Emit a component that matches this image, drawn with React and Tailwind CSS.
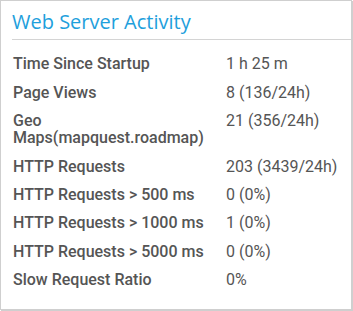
import React from "react";

const rows = [
  ["Time Since Startup", "1 h 25 m"],
  ["Page Views", "8 (136/24h)"],
  ["Geo Maps(mapquest.roadmap)", "21 (356/24h)"],
  ["HTTP Requests", "203 (3439/24h)"],
  ["HTTP Requests > 500 ms", "0 (0%)"],
  ["HTTP Requests > 1000 ms", "1 (0%)"],
  ["HTTP Requests > 5000 ms", "0 (0%)"],
  ["Slow Request Ratio", "0%"],
];

export default function App() {
  return (
    <div className="w-[353px] h-[311px] bg-white">
      <div className="w-[352px] h-[310px] border border-[#cfcfcf] shadow-[1px_1px_0_#cfcfcf] bg-white flex flex-col">
        <div className="ml-[11px] border-b border-[#d4d4d4] pt-[7px] pb-[4px]">
          <h2
            className="text-[20px] leading-[27px] text-[#1ea0dc]"
            style={{ fontFamily: '"Open Sans", sans-serif' }}
          >
            Web Server Activity
          </h2>
        </div>
        <div
          className="mt-[10px] px-3 grid grid-cols-[213px_1fr] text-[16px] leading-[17.5px] text-[#555555]"
          style={{ fontFamily: "Roboto, sans-serif" }}
        >
          {rows.map(([label, value]) => (
            <React.Fragment key={label}>
              <div className="py-[5.4px] pr-2 font-medium">{label}</div>
              <div className="py-[5.4px]">{value}</div>
            </React.Fragment>
          ))}
        </div>
      </div>
    </div>
  );
}
